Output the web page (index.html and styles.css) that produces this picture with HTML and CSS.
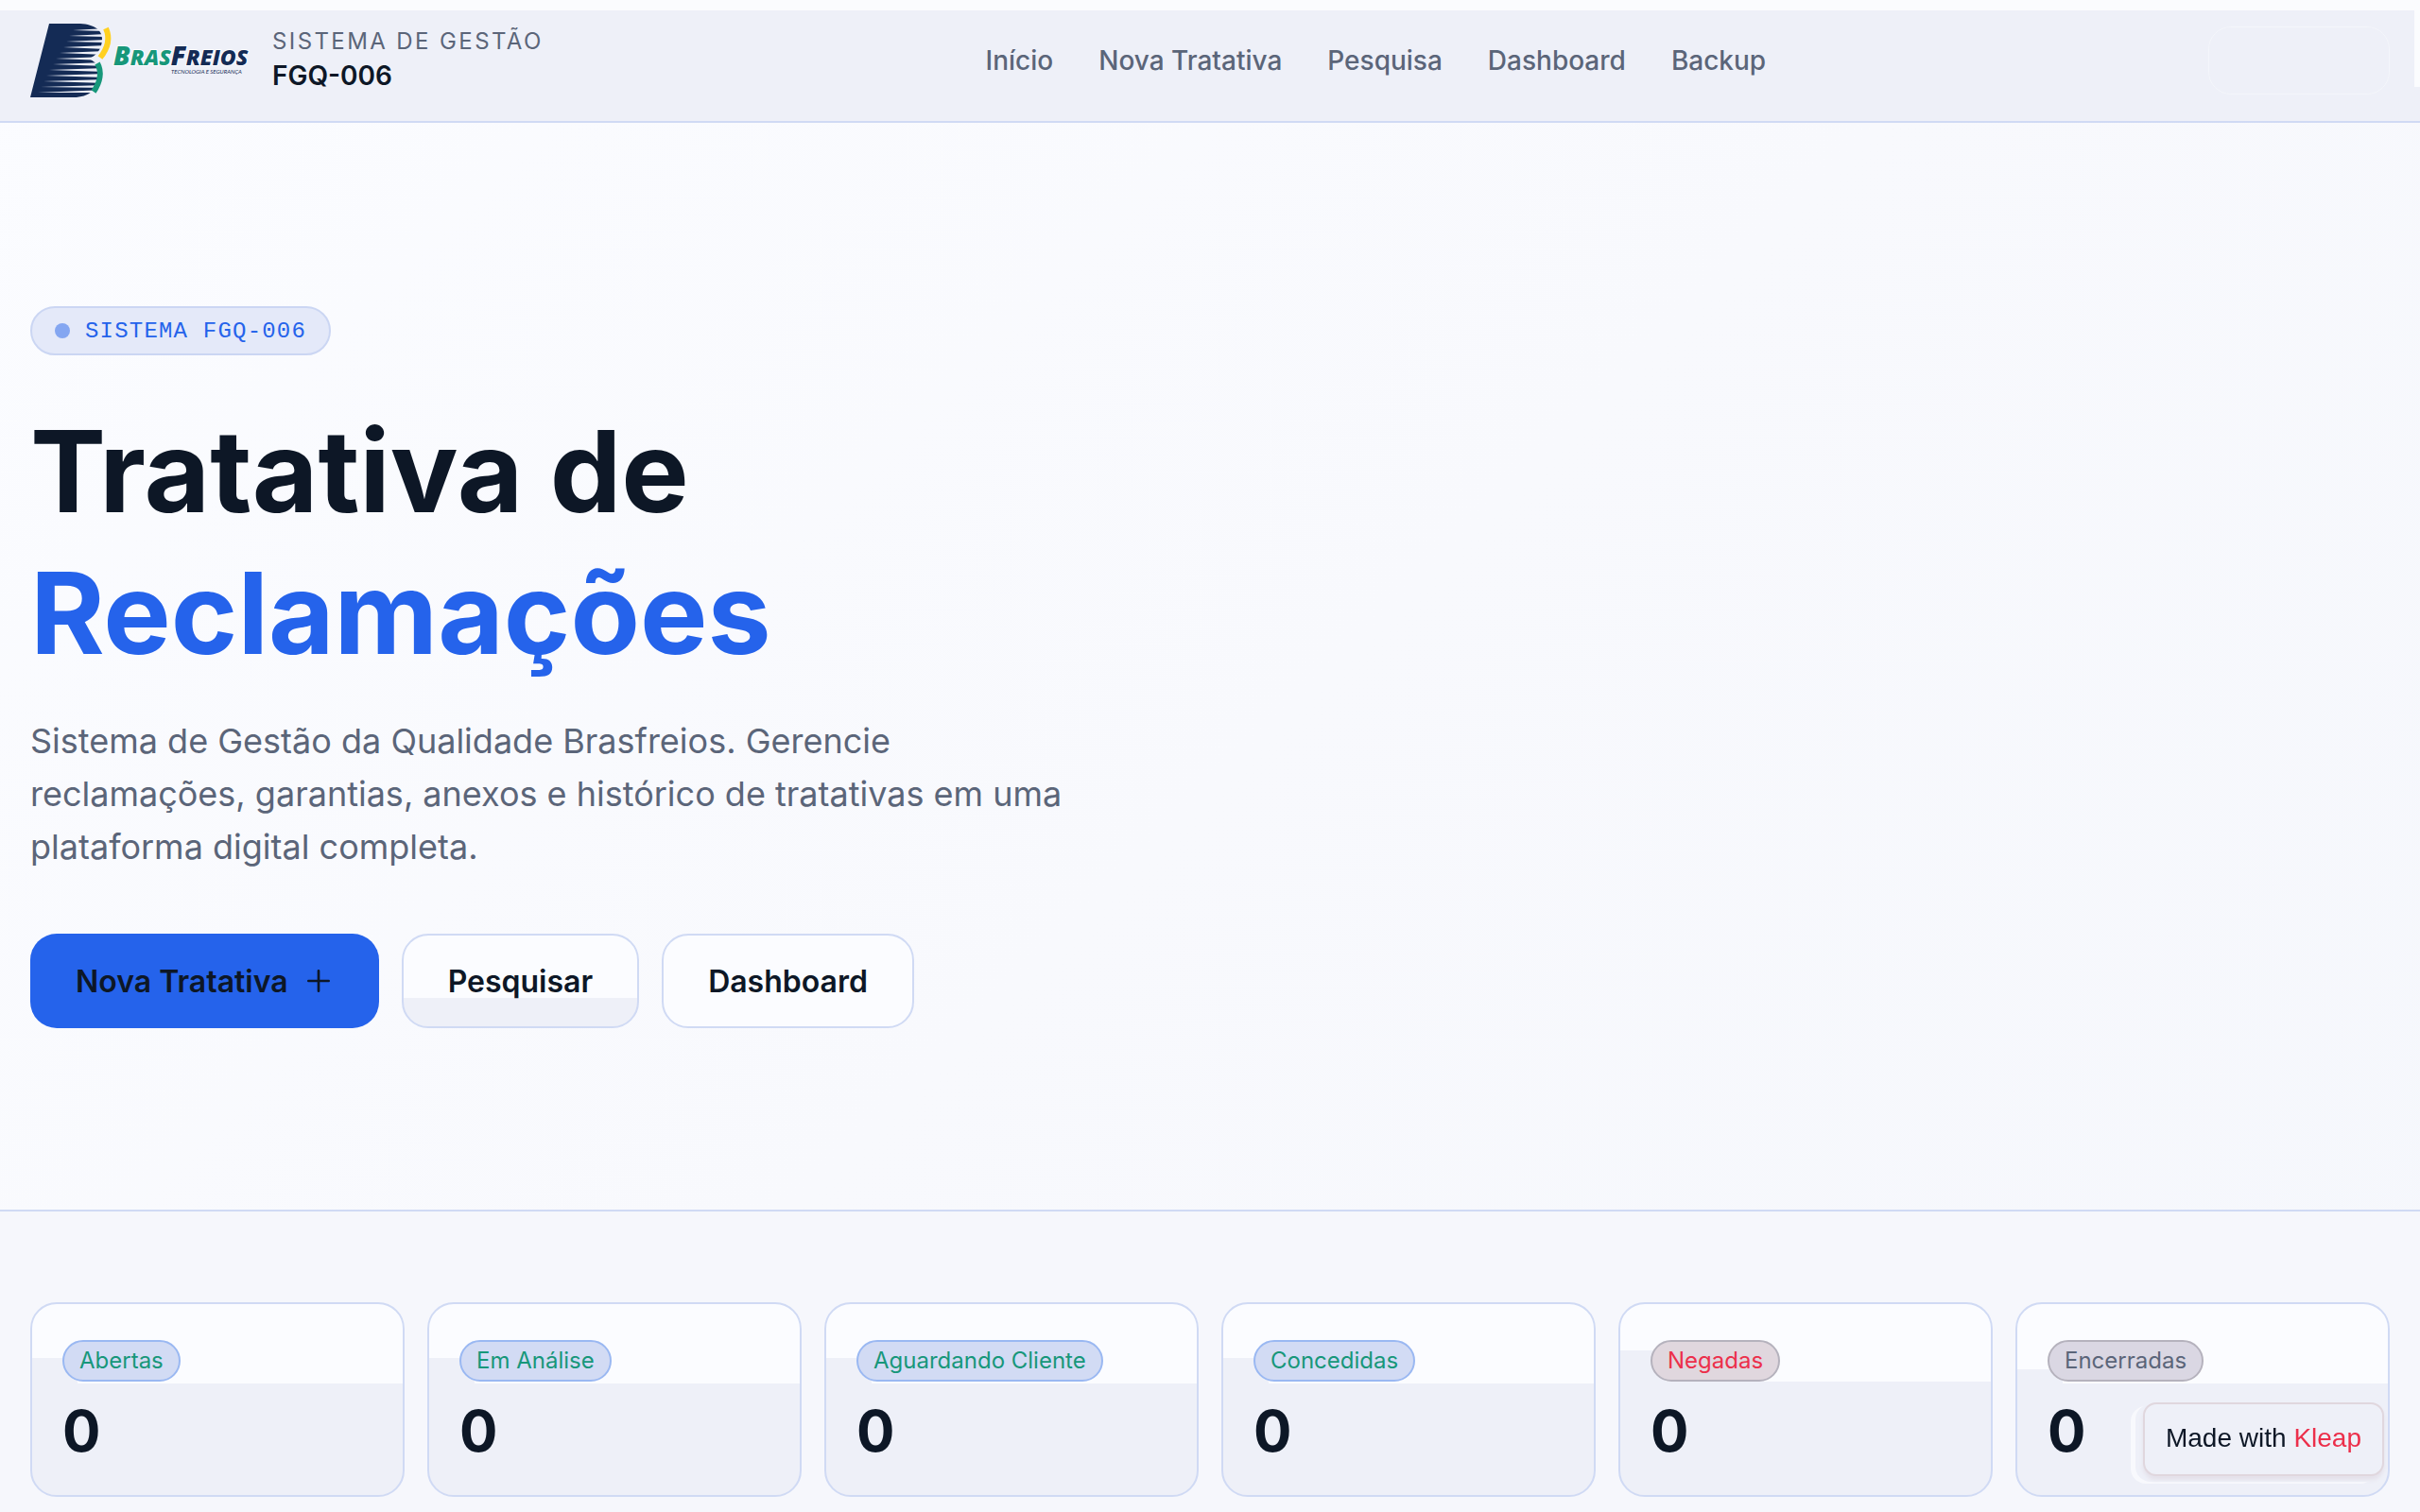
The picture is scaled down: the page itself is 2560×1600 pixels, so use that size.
FILE: index.html
```html
<!DOCTYPE html>
<html lang="pt-BR">
<head>
    <meta charset="UTF-8">
    <meta name="viewport" content="width=device-width, initial-scale=1.0">
    <title>Tratativa de Reclamações</title>
    <link rel="stylesheet" href="styles.css">
</head>
<body>

    <header class="topbar">
        <a class="brand" href="#">
            <svg class="logo" viewBox="0 0 232 80" role="img" aria-label="Brasfreios">
                <path fill="#142b55" d="M20 1H50C66 1 76 7 76 17C76 28 70 35 62 38C71 42 75 50 74 58C72 70 62 79 46 79H0Z"/>
                <g fill="#eef0f8">
                    <path d="M45 8L80 6V9Z"/>
                    <path d="M41 14L80 12V15Z"/>
                    <path d="M38 20L80 18V21Z"/>
                    <path d="M35 26L80 24V28Z"/>
                    <path d="M31 32L80 30V34Z"/>
                    <path d="M27 38L80 36V40Z"/>
                    <path d="M24 44L80 42V46Z"/>
                    <path d="M20 50L80 48V52Z"/>
                    <path d="M17 56L80 54V58Z"/>
                    <path d="M14 62L80 60V64Z"/>
                    <path d="M11 68L80 66V69Z"/>
                    <path d="M8 74L80 71V74Z"/>
                </g>
                <path fill="none" stroke="#ffd020" stroke-width="6" d="M80 6C85 17 82 27 74 37"/>
                <path fill="none" stroke="#17977a" stroke-width="6" d="M71 43C76 52 74 63 67 73"/>
                <text class="logo-name" x="88" y="45"><tspan class="green">B<tspan class="small">RAS</tspan></tspan>F<tspan class="small">REIOS</tspan></text>
                <text class="logo-slogan" x="149" y="54">TECNOLOGIA E SEGURANÇA</text>
            </svg>
            <span class="brand-text">
                <span class="brand-label">SISTEMA DE GESTÃO</span>
                <span class="brand-code">FGQ-006</span>
            </span>
        </a>
        <nav class="menu">
            <a href="#">Início</a>
            <a href="#">Nova Tratativa</a>
            <a href="#">Pesquisa</a>
            <a href="#">Dashboard</a>
            <a href="#">Backup</a>
        </nav>
        <button class="ghost-button" type="button" aria-label="Entrar"></button>
    </header>

    <main>
        <section class="hero">
            <div class="tag"><span class="dot"></span>SISTEMA FGQ-006</div>
            <h1>Tratativa de <span>Reclamações</span></h1>
            <p>Sistema de Gestão da Qualidade Brasfreios. Gerencie reclamações, garantias, anexos e histórico de tratativas em uma plataforma digital completa.</p>
            <div class="buttons">
                <a class="button primary" href="#">Nova Tratativa
                    <svg class="plus" viewBox="0 0 24 24" fill="none" stroke="currentColor" stroke-width="2" stroke-linecap="round" aria-hidden="true">
                        <path d="M12 4v16M4 12h16"/>
                    </svg>
                </a>
                <a class="button search" href="#">Pesquisar</a>
                <a class="button" href="#">Dashboard</a>
            </div>
        </section>

        <section class="stats">
            <div class="card">
                <span class="status">Abertas</span>
                <strong>0</strong>
            </div>
            <div class="card">
                <span class="status">Em Análise</span>
                <strong>0</strong>
            </div>
            <div class="card">
                <span class="status">Aguardando Cliente</span>
                <strong>0</strong>
            </div>
            <div class="card">
                <span class="status">Concedidas</span>
                <strong>0</strong>
            </div>
            <div class="card denied">
                <span class="status">Negadas</span>
                <strong>0</strong>
            </div>
            <div class="card closed">
                <span class="status">Encerradas</span>
                <strong>0</strong>
            </div>
        </section>
    </main>

    <a class="made-with" href="#">Made with <span>Kleap</span></a>

</body>
</html>
```
FILE: styles.css
```css
* {
    box-sizing: border-box;
}

body {
    margin: 0;
    font-family: Inter, sans-serif;
    color: #0d1726;
    background: linear-gradient(135deg, #fbfcff 0%, #f8f9fd 50%, #f5f7fc 100%);
    min-height: 100vh;
    overflow: hidden;
}

a {
    color: inherit;
    text-decoration: none;
}

.topbar {
    display: flex;
    align-items: center;
    justify-content: space-between;
    height: 130px;
    padding: 0 32px;
    border-bottom: 2px solid #d0daf4;
    background:
        linear-gradient(#fbfcfe, #fbfcfe) right top / 6px 92px no-repeat,
        linear-gradient(#fbfcfe 11px, #eef0f8 11px);
}

.brand {
    display: flex;
    align-items: center;
    gap: 24px;
}

.logo {
    width: 232px;
    height: 80px;
    overflow: visible;
}

.logo-name {
    font-family: "Open Sans", sans-serif;
    font-size: 28px;
    font-weight: 800;
    font-style: italic;
    fill: #142b55;
    stroke: #fbfcff;
    stroke-width: 2px;
    paint-order: stroke;
}

.logo-name .green {
    fill: #17977a;
}

.logo-name .small {
    font-size: 23px;
}

.logo-slogan {
    font-family: Lato, sans-serif;
    font-size: 6px;
    font-style: italic;
    fill: #142b55;
}

.brand-text {
    display: flex;
    flex-direction: column;
}

.brand-label {
    font-size: 24px;
    line-height: 32px;
    letter-spacing: 0.1em;
    color: #5b6579;
}

.brand-code {
    font-size: 28px;
    line-height: 40px;
    font-weight: 600;
}

.menu {
    display: flex;
    gap: 48px;
    font-size: 28px;
    line-height: 40px;
    font-weight: 500;
    color: #5b6579;
}

.ghost-button {
    width: 192px;
    height: 72px;
    border: 1px solid #f4f6fb;
    border-radius: 24px;
    background: none;
}

.hero {
    padding: 194px 32px 192px;
    border-bottom: 2px solid #d0daf4;
}

.tag {
    display: inline-flex;
    align-items: center;
    gap: 16px;
    height: 52px;
    padding: 0 24px;
    border: 2px solid #cbd6f3;
    border-radius: 26px;
    background: #e4e9f9;
    color: #2563eb;
    font-family: "Liberation Mono", monospace;
    font-size: 24px;
    letter-spacing: 0.05em;
}

.dot {
    width: 16px;
    height: 16px;
    border-radius: 50%;
    background: #84a6f1;
}

h1 {
    margin: 48px 0 32px;
    font-size: 120px;
    line-height: 150px;
    font-weight: 700;
}

h1 span {
    display: block;
    color: #2563eb;
}

.hero p {
    max-width: 1136px;
    margin: 0 0 64px;
    font-size: 36px;
    line-height: 56px;
    color: #5b6579;
}

.buttons {
    display: flex;
    gap: 24px;
}

.button {
    display: flex;
    align-items: center;
    gap: 16px;
    height: 100px;
    padding: 0 47px;
    border: 2px solid #d0daf4;
    border-radius: 28px;
    background: #fbfcff;
    font-size: 32px;
    font-weight: 600;
}

.button.primary {
    padding: 0 48px;
    border: none;
    background: #2563eb;
}

.button.search {
    background: linear-gradient(#fbfcff 66px, #eef0f8 66px);
}

.plus {
    width: 32px;
    height: 32px;
}

.stats {
    display: grid;
    grid-template-columns: repeat(6, 1fr);
    gap: 24px;
    padding: 96px 32px;
    background: #f6f7fc;
}

.card {
    --left-split: 57px;
    --split: 84px;
    display: flex;
    flex-direction: column;
    align-items: flex-start;
    gap: 16px;
    padding: 38px 32px 32px;
    border: 2px solid #d0daf4;
    border-radius: 28px;
    background:
        linear-gradient(transparent var(--left-split), #eef0f8 var(--left-split)) left / 48px 100% no-repeat,
        linear-gradient(#fbfcff var(--split), #eef0f8 var(--split));
}

.status {
    padding: 4px 16px;
    border: 2px solid #9ab8f2;
    border-radius: 22px;
    background: #d2dbf4;
    color: #17977a;
    font-size: 24px;
    line-height: 32px;
}

.card strong {
    font-size: 60px;
    line-height: 72px;
    font-weight: 700;
}

.denied {
    --left-split: 49px;
    --split: 82px;
}

.denied .status {
    border-color: #b5b2bd;
    background: #e0d7de;
    color: #ec2f4b;
}

.closed {
    --left-split: 69px;
}

.closed .status {
    border-color: #b5b2bd;
    background: #dad7e3;
    color: #5b6579;
}

/* floating badge */
.made-with {
    position: fixed;
    right: 38px;
    bottom: 38px;
    padding: 16px 22px 18px;
    border: 2px solid #e0d7de;
    border-radius: 14px;
    background: #eef0f8;
    box-shadow: 0 4px 4px #e4e1ea, -6px 4px 0 2px #eef0f8, -11px 6px 0 2px #f8f9fd;
    font-family: "Liberation Sans", sans-serif;
    font-size: 28px;
    line-height: 40px;
}

.made-with span {
    color: #ec2f4b;
}
```
